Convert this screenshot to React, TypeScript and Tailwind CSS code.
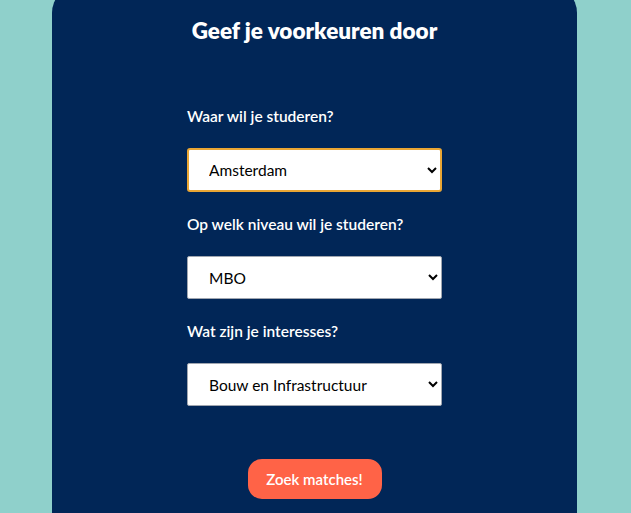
import { useState } from "react";

const fields = [
  {
    id: "stad",
    label: "Waar wil je studeren?",
    options: ["Amsterdam", "Rotterdam", "Utrecht", "Den Haag"],
  },
  {
    id: "niveau",
    label: "Op welk niveau wil je studeren?",
    options: ["MBO", "HBO", "WO"],
  },
  {
    id: "interesse",
    label: "Wat zijn je interesses?",
    options: ["Bouw en Infrastructuur", "Zorg en Welzijn", "Techniek", "Economie"],
  },
];

export default function App() {
  const [values, setValues] = useState<Record<string, string>>({
    stad: "Amsterdam",
    niveau: "MBO",
    interesse: "Bouw en Infrastructuur",
  });

  return (
    <div className="h-[513px] overflow-hidden bg-[#8fd0cb] font-['Lato',sans-serif]">
      <div className="-mt-[15px] ml-[52px] w-[525px] rounded-[28px] bg-[#012657] pb-[60px] pt-[31px]">
        <h1 className="text-center text-[22.5px] font-extrabold leading-[30px] text-white">Geef je voorkeuren door</h1>

        <form className="mx-auto mt-[59px] flex w-[255px] flex-col">
          {fields.map((f, i) => (
            <div key={f.id} className={i === 0 ? "" : "mt-[21px]"}>
              <label htmlFor={f.id} className="block text-[15.5px] font-semibold leading-[22px] text-white">
                {f.label}
              </label>
              <select
                id={f.id}
                value={values[f.id]}
                onChange={(e) => setValues({ ...values, [f.id]: e.target.value })}
                className={
                  i === 0
                    ? "mt-[21px] h-[44px] w-full rounded-[3px] border-2 border-[#eaa634] bg-white pl-[16px] pr-[6px] text-[15.5px] text-black outline-none"
                    : "mt-[21px] h-[43px] w-full rounded-[2px] border border-[#a0a6b0] bg-white pl-[17px] pr-[6px] text-[15.5px] text-black outline-none"
                }
              >
                {f.options.map((o) => (
                  <option key={o}>{o}</option>
                ))}
              </select>
            </div>
          ))}

          <button
            type="button"
            className="mx-auto mt-[53px] h-[40px] w-[134px] rounded-[14px] bg-[#ff6347] text-[15px] font-semibold text-white"
          >
            Zoek matches!
          </button>
        </form>
      </div>
    </div>
  );
}
